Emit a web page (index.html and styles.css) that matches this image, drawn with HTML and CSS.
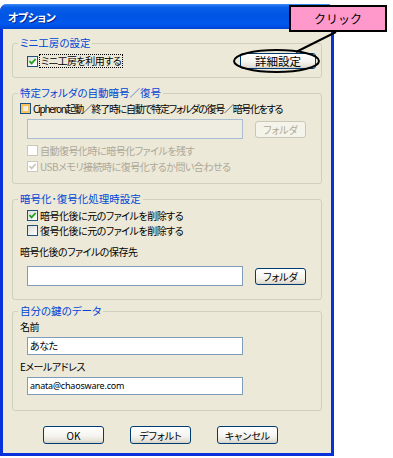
FILE: index.html
```html
<!DOCTYPE html>
<html lang="ja">
<head>
    <meta charset="UTF-8">
    <meta name="viewport" content="width=device-width, initial-scale=1.0">
    <title>オプション</title>
    <link rel="stylesheet" href="styles.css">
</head>
<body>
    <div class="page">
        <div class="window">
            <div class="titlebar">オプション</div>

            <div class="client">
                <!-- mini kobo -->
                <fieldset class="group group-mini">
                    <legend>ミニ工房の設定</legend>
                    <div class="row row-mini">
                        <div class="check">
                            <span class="cb"><svg viewBox="0 0 9 9"><polyline points="1.5,4.2 3.6,6.4 7.6,2"/></svg></span>
                            <span class="focus">ミニ工房を利用する</span>
                        </div>
                        <button class="btn btn-detail">詳細設定</button>
                    </div>
                </fieldset>

                <!-- auto encrypt -->
                <fieldset class="group group-auto">
                    <legend>特定フォルダの自動暗号／復号</legend>
                    <div class="row row-cipheron">
                        <div class="check">
                            <span class="cb cb-hover"></span>
                            <span>Cipheron起動／終了時に自動で特定フォルダの復号／暗号化をする</span>
                        </div>
                    </div>
                    <div class="row row-field">
                        <div class="field field-disabled"></div>
                        <button class="btn btn-folder" disabled>フォルダ</button>
                    </div>
                    <div class="row row-sub">
                        <div class="check disabled">
                            <span class="cb"></span>
                            <span>自動復号化時に暗号化ファイルを残す</span>
                        </div>
                    </div>
                    <div class="row row-sub">
                        <div class="check disabled">
                            <span class="cb"><svg viewBox="0 0 9 9"><polyline points="1.5,4.2 3.6,6.4 7.6,2"/></svg></span>
                            <span>USBメモリ接続時に復号化するか問い合わせる</span>
                        </div>
                    </div>
                </fieldset>

                <!-- processing -->
                <fieldset class="group group-proc">
                    <legend>暗号化･復号化処理時設定</legend>
                    <div class="row row-opt first">
                        <div class="check">
                            <span class="cb"><svg viewBox="0 0 9 9"><polyline points="1.5,4.2 3.6,6.4 7.6,2"/></svg></span>
                            <span>暗号化後に元のファイルを削除する</span>
                        </div>
                    </div>
                    <div class="row row-opt">
                        <div class="check">
                            <span class="cb"></span>
                            <span>復号化後に元のファイルを削除する</span>
                        </div>
                    </div>
                    <div class="caption caption-dest">暗号化後のファイルの保存先</div>
                    <div class="row row-field row-dest">
                        <div class="field"></div>
                        <button class="btn btn-folder">フォルダ</button>
                    </div>
                </fieldset>

                <!-- key data -->
                <fieldset class="group group-key">
                    <legend>自分の鍵のデータ</legend>
                    <div class="caption caption-key">名前</div>
                    <div class="field field-key">あなた</div>
                    <div class="caption caption-key second">Eメールアドレス</div>
                    <div class="field field-key field-mail">anata@chaosware.com</div>
                </fieldset>

                <div class="buttons">
                    <button class="btn btn-bottom">OK</button>
                    <button class="btn btn-bottom">デフォルト</button>
                    <button class="btn btn-bottom">キャンセル</button>
                </div>
            </div>
        </div>

        <svg class="marks" viewBox="0 0 393 458">
            <line x1="336" y1="32" x2="296" y2="52"/>
            <ellipse cx="276.5" cy="61" rx="42.5" ry="11"/>
        </svg>
        <div class="callout">クリック</div>
    </div>
</body>
</html>
```

FILE: styles.css
```css
:root {
    --face: #ece9d8;
    --xp-blue: #0831d9;
    --group-line: #d0d0bf;
    --group-text: #0046d5;
    --field-line: #7f9db9;
    --btn-line: #003c74;
    --disabled: #aca899;
}

* {
    box-sizing: border-box;
}

body {
    margin: 0;
    background: #fff;
    color: #000;
    font-family: "Noto Sans CJK JP", "Noto Sans", sans-serif;
    font-size: 10px;
    letter-spacing: -0.5px;
    font-feature-settings: "palt";
}

.page {
    position: relative;
    width: 393px;
    height: 458px;
    overflow: hidden;
}

/* window frame */

.window {
    width: 334px;
    margin-top: 4px;
    border: 3px solid var(--xp-blue);
    border-top: 0;
    border-radius: 7px 7px 0 0;
    background: var(--face);
}

.titlebar {
    height: 25px;
    margin: 0 -3px;
    padding-left: 8px;
    display: flex;
    align-items: center;
    border-radius: 7px 7px 0 0;
    background: linear-gradient(#3d8cf5 0%, #0a5fe8 12%, #0054e3 45%, #0058ee 80%, #0046d6 100%);
    color: #fff;
    font-size: 11px;
    font-weight: bold;
    text-shadow: 1px 1px 0 #0a1e8c;
}

.client {
    padding: 8px 9px 9px 9px;
}

/* group boxes */

.group {
    margin: 0;
    padding: 0;
    min-width: 0;
    border: 1px solid var(--group-line);
    border-radius: 3px;
}

.group legend {
    margin-left: 5px;
    padding: 0 2px;
    line-height: 12px;
    font-size: 10.5px;
    letter-spacing: 0;
    color: var(--group-text);
}

.group + .group {
    margin-top: 9px;
}

.group-mini {
    padding-bottom: 4px;
}

.group-auto {
    padding-bottom: 9px;
}

.group-proc {
    padding-bottom: 13px;
}

.group.group-key {
    margin-top: 5px;
    padding-bottom: 15px;
}

.row {
    display: flex;
    align-items: center;
}

.row-mini {
    height: 24px;
    padding: 0 5px 0 14px;
    justify-content: space-between;
}

.row-cipheron {
    height: 18px;
    padding-left: 7px;
    letter-spacing: -1.3px;
}

.row-field {
    height: 20px;
    margin-top: 2px;
    padding-left: 14px;
}

.row-sub {
    height: 16px;
    padding-left: 14px;
}

.row-sub:nth-of-type(3) {
    margin-top: 3px;
}

.row-opt {
    height: 15px;
    padding-left: 14px;
}

.row-opt.first {
    margin-top: 3px;
}

.row-dest {
    margin-top: 8px;
}

.caption {
    line-height: 12px;
    padding-left: 7px;
}

.caption-dest {
    margin-top: 8px;
}

.caption-key {
    margin-top: 4px;
}

.caption-key.second {
    margin-top: 6px;
}

/* check boxes */

.check {
    display: flex;
    align-items: center;
    gap: 2px;
    white-space: nowrap;
}

.cb {
    width: 11px;
    height: 11px;
    flex: none;
    display: flex;
    border: 1px solid #1c5180;
    background: linear-gradient(135deg, #dcdcd7, #fff);
}

.cb svg {
    width: 9px;
    height: 9px;
    fill: none;
    stroke: #21a121;
    stroke-width: 1.8;
}

.cb-hover {
    box-shadow: inset 0 0 0 2px #f9c35a;
}

.check.disabled {
    color: var(--disabled);
}

.check.disabled .cb {
    border-color: #cac8bb;
    background: #fff;
}

.check.disabled .cb svg {
    stroke: #cac8bb;
}

.focus {
    outline: 1px dotted #000;
    outline-offset: 0;
    padding: 0 1px;
    line-height: 12px;
}

/* text boxes */

.field {
    width: 216px;
    height: 20px;
    flex: none;
    border: 1px solid var(--field-line);
    background: #fff;
}

.field-disabled {
    border-color: #a9bcd2;
    background: #efede2;
}

.field-key {
    height: 18px;
    margin: 4px 0 0 14px;
    padding-left: 2px;
    line-height: 16px;
}

.field-mail {
    font-family: "Noto Sans", sans-serif;
    font-size: 9px;
    letter-spacing: -0.2px;
}

/* buttons */

.btn {
    height: 17px;
    padding: 0;
    border: 1px solid var(--btn-line);
    border-radius: 3px;
    background: linear-gradient(#fff 0%, #f5f4ef 55%, #e6e3d8 85%, #d6d0c5 100%);
    color: #000;
    font: inherit;
    line-height: 15px;
}

.btn:disabled {
    border-color: #c9c7ba;
    background: #f5f4ea;
    color: var(--disabled);
}

.btn-detail {
    width: 76px;
    height: 16px;
    font-size: 11.5px;
}

.btn-folder {
    width: 51px;
    margin-left: 12px;
}

.buttons {
    display: flex;
    gap: 26px;
    margin-top: 15px;
    padding-left: 31px;
}

.btn-bottom {
    width: 61px;
    height: 18px;
}

/* callout overlay */

.marks {
    position: absolute;
    left: 0;
    top: 0;
    width: 393px;
    height: 458px;
    fill: none;
    stroke: #000;
    stroke-width: 2;
}

.callout {
    position: absolute;
    left: 289px;
    top: 5px;
    width: 98px;
    height: 27px;
    display: flex;
    align-items: center;
    justify-content: center;
    border: 2px solid #000;
    background: #ff99cc;
    font-size: 12px;
    letter-spacing: 0;
    font-feature-settings: normal;
}
```
